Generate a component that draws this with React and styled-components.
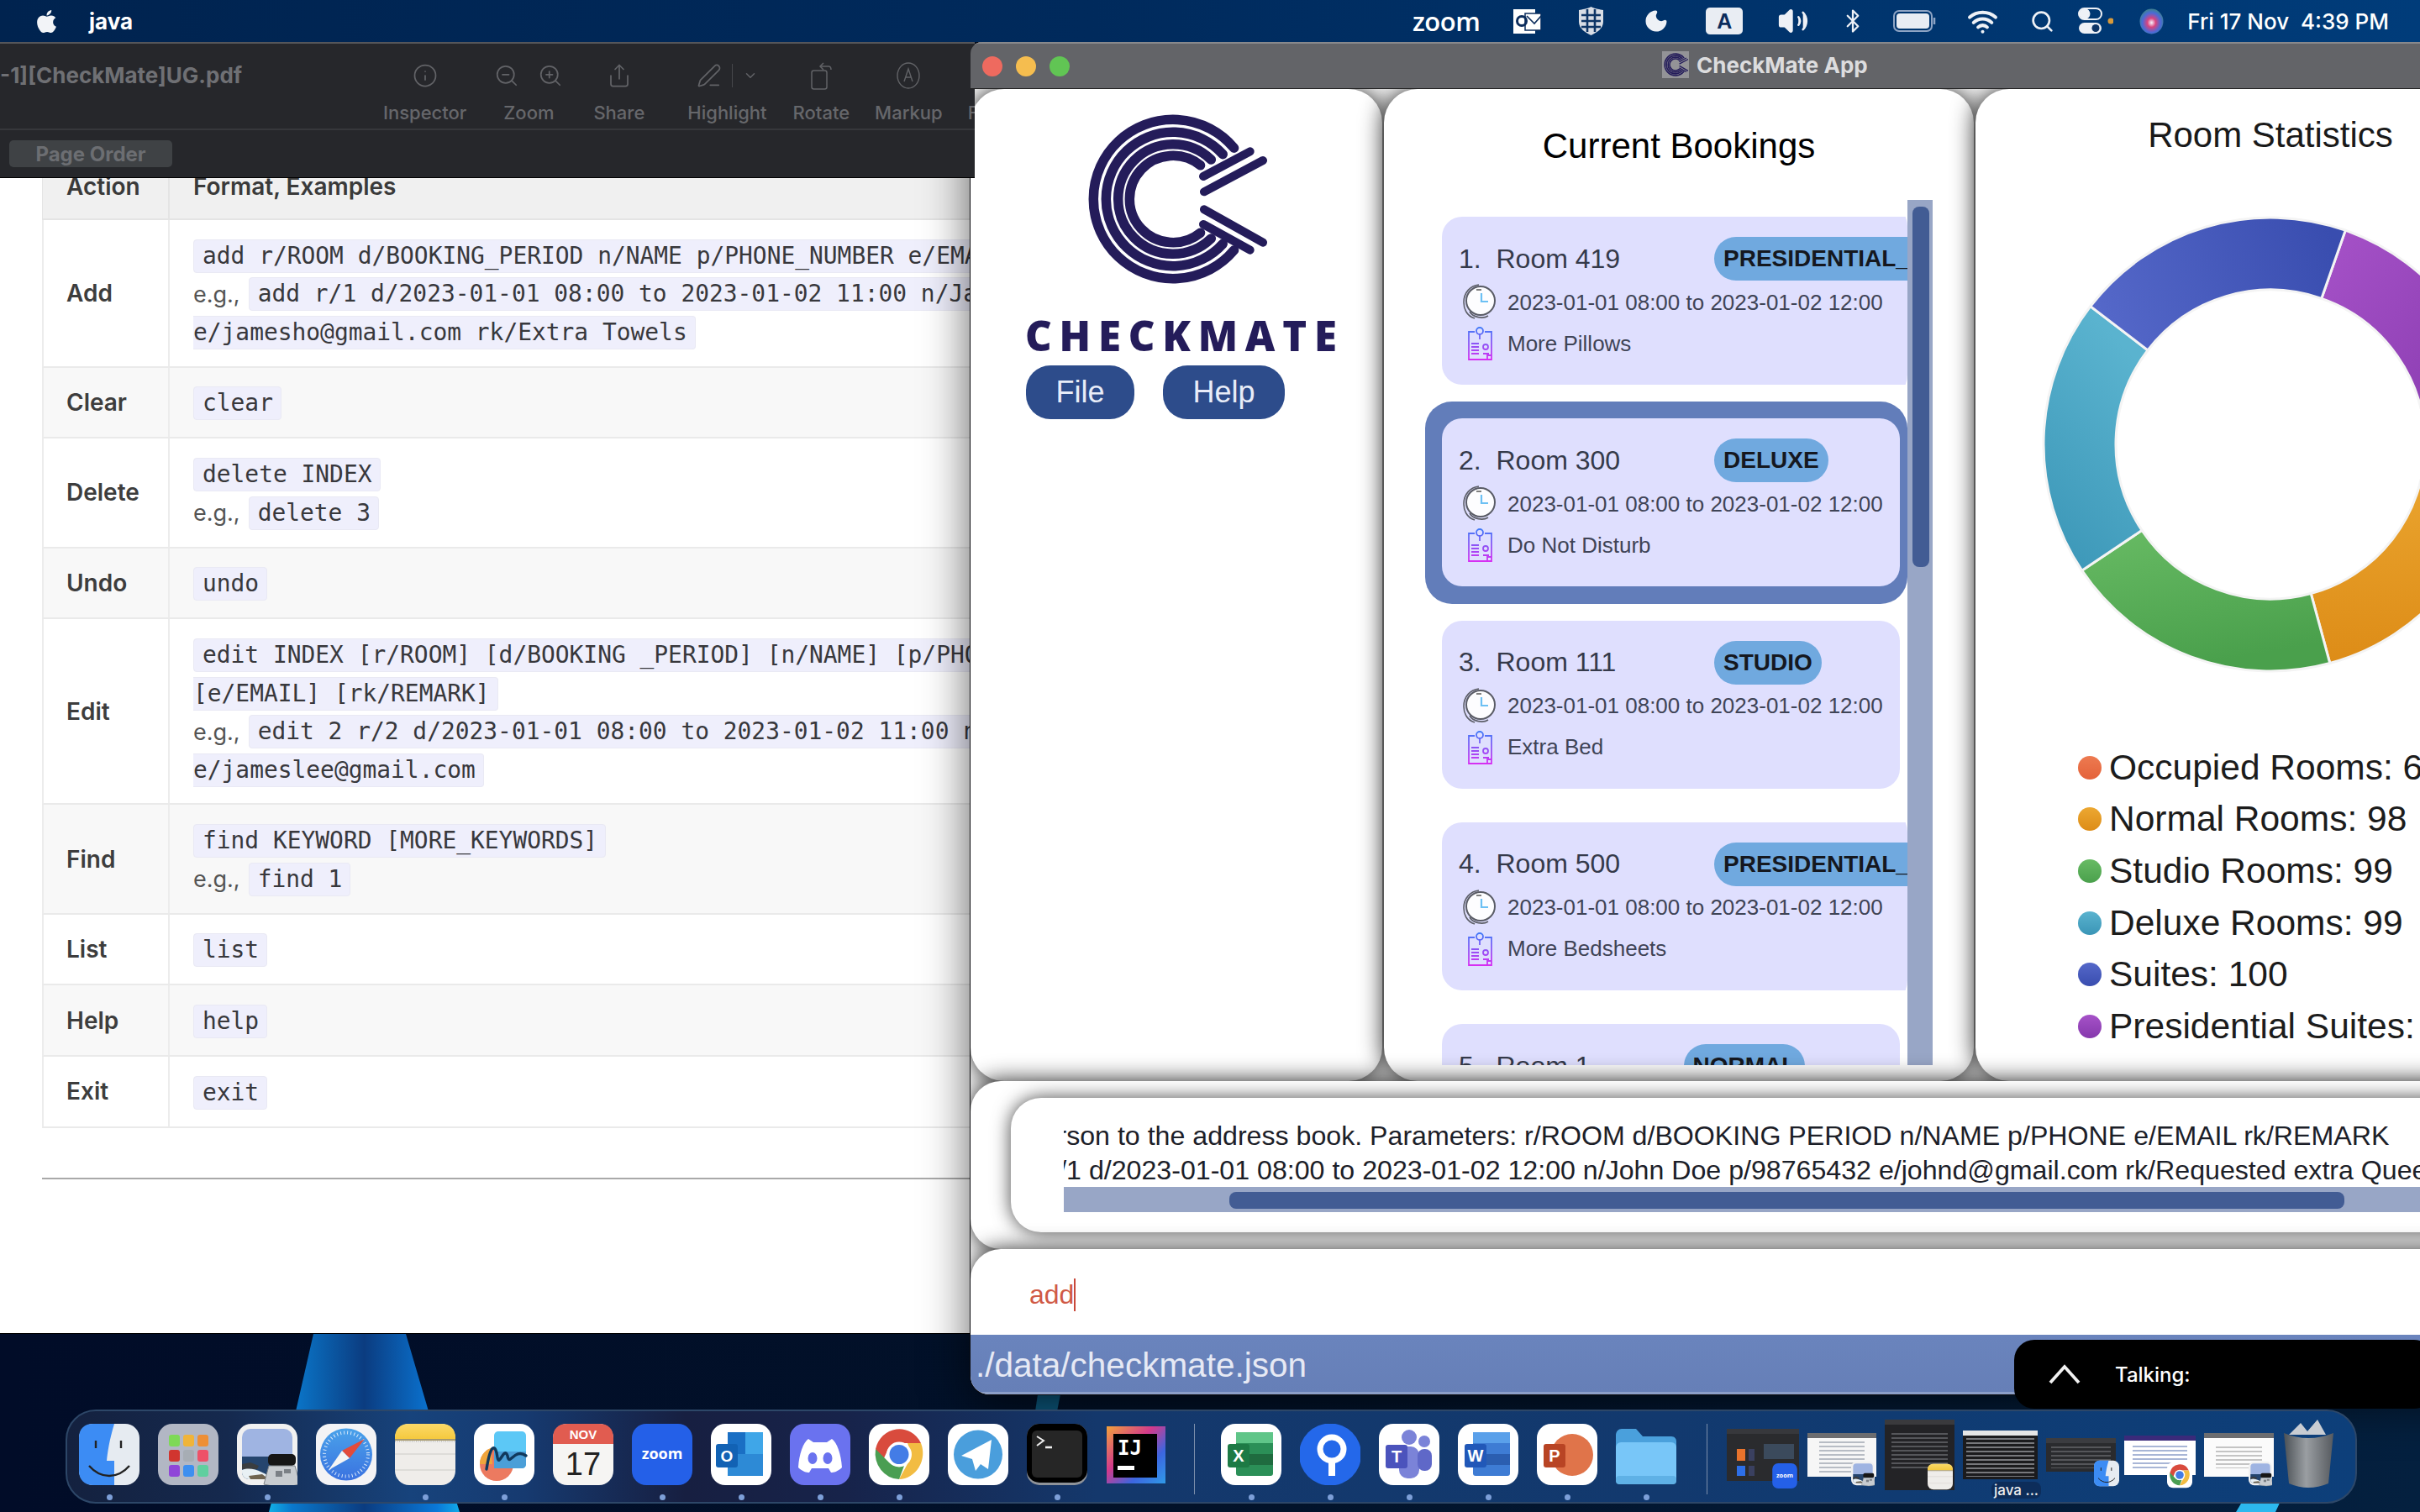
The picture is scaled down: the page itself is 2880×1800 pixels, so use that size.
import React from 'react';
import styled, { createGlobalStyle } from 'styled-components';
import { FaApple } from 'react-icons/fa';
import { Info, ZoomOut, ZoomIn, Share, PenLine, ChevronDown, Volume2, Bluetooth, Wifi, Search, Moon } from 'lucide-react';

const GlobalStyle = createGlobalStyle`
  html, body { margin: 0; padding: 0; background: #020d2a; }
  * { box-sizing: border-box; }
`;

const SANS = '"Liberation Sans", Arial, sans-serif';
const UI = 'Inter, "Liberation Sans", sans-serif';
const MONO = '"DejaVu Sans Mono", "Liberation Mono", monospace';

const Screen = styled.div`
  position: relative;
  width: 2880px;
  height: 1800px;
  overflow: hidden;
  display: flex;
  flex-direction: column;
  font-family: ${SANS};
  background: linear-gradient(90deg, #010c28 0%, #021229 50%, #04203f 100%);
`;

const Wallpaper = styled.svg`
  position: absolute;
  left: 0;
  top: 0;
`;

/* menu bar */
const MenuBar = styled.div`
  position: relative;
  z-index: 5;
  height: 50px;
  flex: none;
  display: flex;
  align-items: center;
  padding: 0 37px 0 40px;
  color: #fff;
  background: linear-gradient(90deg, #00234f 0%, #002a5c 45%, #003c7a 100%);
`;

const AppName = styled.span`
  font: 700 26px ${UI};
  margin-left: 35px;
  margin-right: auto;
`;

const ZoomWord = styled.span`
  font: 600 31px "Open Sans", sans-serif;
  letter-spacing: -0.5px;
  margin-right: 40px;
`;

const Clock = styled.span`
  font: 500 26px ${UI};
  white-space: pre;
  margin-left: 28px;
`;

const StatusIcon = styled.span`
  display: flex;
  align-items: center;
  justify-content: center;
  margin-left: ${p => p.$ml || 0}px;
`;

const InputBadge = styled.span`
  width: 44px;
  height: 32px;
  border-radius: 5px;
  background: #e9edf3;
  color: #0b2c5c;
  display: flex;
  align-items: center;
  justify-content: center;
  font: 700 25px ${SANS};
`;

const DesktopArea = styled.div`
  position: relative;
  flex: none;
  height: 1628px;
`;

/* pdf window */
const PdfWindow = styled.div`
  position: absolute;
  left: 0;
  top: 0;
  width: 1160px;
  height: 1538px;
  display: flex;
  flex-direction: column;
  overflow: hidden;
  background: #fff;
  border-bottom: 1px solid #000;
`;

const PdfToolbar = styled.div`
  height: 161px;
  flex: none;
  background: #26272b;
  border-top: 2px solid #55565a;
  display: flex;
  flex-direction: column;
  box-shadow: 0 1px 0 #000;
  position: relative;
  z-index: 1;
`;

const ToolRow = styled.div`
  height: 103px;
  display: flex;
  border-bottom: 2px solid #36373b;
`;

const FileName = styled.div`
  width: 456px;
  flex: none;
  padding-top: 22px;
  font: 700 26px ${UI};
  color: #6f7074;
  white-space: nowrap;
`;

const ToolItem = styled.div`
  flex: none;
  margin-left: ${p => p.$ml || 0}px;
  display: flex;
  flex-direction: column;
  align-items: center;
  gap: 13px;
  padding-top: 20px;
  color: #626367;
`;

const ToolIcons = styled.div`
  height: 36px;
  display: flex;
  align-items: center;
  gap: ${p => p.$gap || 0}px;
`;

const ToolLabel = styled.span`
  font: 500 22px ${UI};
  color: #66676b;
`;

const ToolDivider = styled.span`
  width: 1px;
  height: 28px;
  background: #47484c;
`;

const PageOrderRow = styled.div`
  flex: 1;
  padding-left: 11px;
  display: flex;
  align-items: center;
`;

const PageOrder = styled.div`
  width: 194px;
  height: 32px;
  border-radius: 5px;
  background: #3f4245;
  color: #6c6e72;
  font: 700 24px ${UI};
  display: flex;
  align-items: center;
  justify-content: center;
`;

const PdfPage = styled.div`
  flex: 1;
  padding-left: 50px;
  overflow: hidden;
  color: #333;
`;

const TableHead = styled.div`
  height: 51px;
  display: grid;
  grid-template-columns: 149px 1fr;
  background: #f0f0f0;
  border-bottom: 2px solid #e4e4e4;
  border-left: 1px solid #e4e4e4;
`;

const TableRow = styled.div`
  display: grid;
  grid-template-columns: 148px 1fr;
  background: ${p => (p.$shade ? '#f8f8f8' : '#fff')};
  border-bottom: 2px solid #eaeaea;
  border-left: 2px solid #ececec;
`;

const HeadCell = styled.div`
  font: 600 28px ${UI};
  line-height: 20px;
  padding: 0 0 27px 28px;
  display: flex;
  align-items: center;
  color: #3a3a3a;
  & + & { border-left: 2px solid #e4e4e4; }
`;

const ActionCell = styled.div`
  font: 600 28px ${UI};
  padding-left: 27px;
  display: flex;
  align-items: center;
  color: #3d3d3d;
`;

const FormatCell = styled.div`
  border-left: 2px solid #ececec;
  padding: 20px 0 17.2px 28px;
  overflow: hidden;
`;

const CodeLine = styled.div`
  height: 45.5px;
  display: flex;
  align-items: center;
  white-space: nowrap;
`;

const Eg = styled.span`
  font: 400 27px ${UI};
  color: #555;
  margin-right: 10px;
`;

const Code = styled.code`
  font: 400 27.9px ${MONO};
  color: #38383c;
  background: #efeffc;
  border: 1px solid #e9e9f4;
  border-left-width: ${p => (p.$wrapped ? 0 : 1)}px;
  border-radius: ${p => (p.$wrapped ? '0 4px 4px 0' : '4px')};
  height: 40px;
  line-height: 38px;
  padding: 0 9px 0 ${p => (p.$wrapped ? 0 : 10)}px;
`;

const PageRule = styled.div`
  height: 2px;
  margin-top: 59px;
  background: #a9a9a9;
`;

/* checkmate window */
const AppWindow = styled.div`
  position: absolute;
  left: 1155px;
  top: 0;
  width: 1901px;
  height: 1610px;
  display: flex;
  flex-direction: column;
  overflow: hidden;
  background: #fff;
  border-radius: 14px 0 0 22px;
  box-shadow: 0 0 0 1px #0c0c0e, 0 12px 56px rgba(0, 0, 0, 0.62);
`;

const TitleBar = styled.div`
  position: relative;
  z-index: 2;
  height: 56px;
  flex: none;
  background: #636468;
  border-top: 2px solid #88898c;
  border-bottom: 1px solid #222;
  display: flex;
  align-items: center;
  padding-left: 14px;
`;

const Light = styled.span`
  width: 24px;
  height: 24px;
  border-radius: 50%;
  margin-right: 16px;
  background: ${p => p.$color};
`;

const TitleText = styled.div`
  display: flex;
  align-items: center;
  gap: 9px;
  margin: -3px 0 0 689px;
  font: 700 26px ${UI};
  color: #dcdcde;
`;

const TitleLogo = styled.span`
  width: 32px;
  height: 32px;
  background: #939397;
  display: flex;
  align-items: center;
  justify-content: center;
`;

const TopPanels = styled.div`
  height: 1181px;
  flex: none;
  display: flex;
  gap: 2px;
  background: #fff;
`;

const Panel = styled.section`
  flex: none;
  width: ${p => p.$width}px;
  height: 100%;
  background: #fff;
  border-radius: 40px;
  box-shadow: 0 0 28px rgba(0, 0, 0, 0.88);
  display: flex;
  flex-direction: column;
`;

const Logo = styled.svg`
  display: block;
  margin: 26px 0 0 136px;
  filter: blur(0.6px);
  flex: none;
`;

const Brand = styled.div`
  margin: 32px 0 0 65px;
  font: 800 49px/50px "Open Sans", sans-serif;
  letter-spacing: 8.8px;
  color: #241c5a;
  filter: blur(0.5px);
`;

const ButtonRow = styled.div`
  display: flex;
  gap: 34px;
  margin: 11px 0 0 66px;
`;

const MenuButton = styled.div`
  height: 64px;
  width: ${p => p.$width}px;
  border-radius: 29px;
  background: #2d4c8b;
  color: #e8ecf8;
  font: 400 36px ${SANS};
  display: flex;
  align-items: center;
  justify-content: center;
`;

const PanelTitle = styled.h2`
  margin: 0;
  font: 400 42px/50px ${SANS};
  text-align: center;
  color: ${p => p.$color || '#000'};
`;

const BookingTitle = styled(PanelTitle)`
  margin: 43px 0 39px;
`;

const ScrollPane = styled.div`
  height: 1030px;
  width: 604px;
  margin-left: 49px;
  display: flex;
`;

const BookingList = styled.div`
  width: 574px;
  flex: none;
  overflow: hidden;
`;

const BookingCell = styled.div`
  height: 240.3px;
  padding: 20px 9px 20px 20px;
  border-radius: 32px;
  background: ${p => (p.$selected ? '#627dba' : 'transparent')};
  overflow: hidden;
`;

const BookingCard = styled.div`
  width: ${p => (p.$wide ? 620 : 545)}px;
  height: 200px;
  border-radius: 24px;
  background: #dfdffe;
  padding: 24px 0 0 20px;
  color: #353a4a;
`;

const RoomRow = styled.div`
  height: 52px;
  display: flex;
  align-items: center;
`;

const RoomName = styled.span`
  font: 400 32px ${SANS};
  white-space: pre;
  min-width: ${p => (p.$short ? 0 : 193)}px;
  margin-right: 111px;
`;

const Pill = styled.span`
  height: 52px;
  border-radius: 26px;
  background: #70a9df;
  color: #15181f;
  padding: 0 11px;
  font: 700 28px/52px ${SANS};
  white-space: nowrap;
`;

const DetailRow = styled.div`
  display: flex;
  align-items: center;
  gap: 13px;
  height: ${p => p.$height}px;
  margin: ${p => p.$mt}px 0 0 5px;
  font: 400 26px ${SANS};
  color: #3f4456;
  white-space: nowrap;
`;

const IconSlot = styled.span`
  width: 40px;
  display: flex;
  justify-content: center;
  flex: none;
`;

const ScrollTrack = styled.div`
  width: 30px;
  flex: none;
  padding: 8px 4px 0 6px;
  background: #98a6c6;
`;

const ScrollThumb = styled.div`
  height: 429px;
  border-radius: 8px;
  background: #425c94;
`;

const StatsBody = styled.div`
  padding-top: 30px;
  display: flex;
  flex-direction: column;
  align-items: center;
`;

const Donut = styled.svg`
  display: block;
  margin-top: 70px;
`;

const Legend = styled.ul`
  list-style: none;
  margin: 81px 0 0;
  padding: 0 0 0 122px;
  align-self: stretch;
`;

const LegendRow = styled.li`
  height: 61.6px;
  display: flex;
  align-items: center;
  gap: 9px;
  font: 400 42.5px ${SANS};
  color: #1c1c1c;
  white-space: nowrap;
`;

const LegendDot = styled.span`
  width: 28px;
  height: 28px;
  border-radius: 50%;
  background: ${p => p.$color};
`;

const ResultPanel = styled.section`
  height: 200px;
  flex: none;
  background: #fff;
  border-radius: 36px;
  box-shadow: 0 0 28px rgba(0, 0, 0, 0.88);
  padding: 20px 0 0 48px;
`;

const ResultBox = styled.div`
  height: 160px;
  background: #fff;
  border-radius: 36px 0 0 36px;
  box-shadow: 0 0 22px rgba(0, 0, 0, 0.72);
  padding: 25px 0 0 63px;
`;

const ResultClip = styled.div`
  height: 81px;
  overflow: hidden;
`;

const ResultLine = styled.div`
  margin-left: -222px;
  font: 400 32.15px/41px ${SANS};
  color: #1c2028;
  white-space: pre;
`;

const HScrollTrack = styled.div`
  height: 30px;
  padding: 6px 0 4px 197px;
  background: #98a6c6;
`;

const HScrollThumb = styled.div`
  width: 1327px;
  height: 20px;
  border-radius: 8px;
  background: #425c94;
`;

const InputPanel = styled.section`
  height: 102px;
  flex: none;
  background: #fff;
  border-radius: 36px 0 0 0;
  box-shadow: 0 0 26px rgba(0, 0, 0, 0.82);
  padding-left: 70px;
  display: flex;
  align-items: center;
`;

const CommandText = styled.span`
  font: 400 32px/39px ${SANS};
  color: #d05a46;
  border-right: 2px solid #c9483a;
  margin-top: 6px;
`;

const StatusBar = styled.div`
  position: relative;
  flex: 1;
  display: flex;
  align-items: center;
  padding: 4px 0 0 6px;
  background: linear-gradient(#6a84bd, #667fb7);
  border-bottom: 3px solid #8c9fc9;
  font: 400 40.5px ${SANS};
  color: #e6e9f4;
`;

const ZoomHud = styled.div`
  position: absolute;
  left: 2397px;
  top: 1545px;
  width: 500px;
  height: 82px;
  z-index: 4;
  background: #000;
  border-radius: 24px;
  display: flex;
  align-items: center;
  gap: 41px;
  padding-left: 41px;
  color: #fff;
  font: 500 24px ${UI};
`;

/* dock */
const Dock = styled.div`
  position: relative;
  z-index: 3;
  width: 2727px;
  height: 112px;
  margin-left: 78px;
  flex: none;
  display: flex;
  align-items: flex-start;
  padding: 15px 0 0 14px;
  border: 2px solid #2d4768;
  border-radius: 36px;
  background: linear-gradient(90deg,
    #14213f 0%, #15294e 7%, #17437c 15%, #163a70 20%, #171f41 27%, #17234a 34%,
    #14386c 45%, #12396e 70%, #0f3c74 85%, #0d3f7a 100%);
`;

const DockSlot = styled.div`
  width: 72px;
  margin-right: ${p => p.$mr ?? 22}px;
  flex: none;
  display: flex;
  flex-direction: column;
  align-items: center;
`;

const RunDot = styled.span`
  width: 7px;
  height: 7px;
  margin-top: 11px;
  border-radius: 50%;
  background: ${p => (p.$on ? '#7d9fd8' : 'transparent')};
`;

const DockDivider = styled.span`
  width: 1px;
  height: 84px;
  margin: 0 ${p => p.$right}px 0 ${p => p.$left}px;
  background: #7c8fab;
  flex: none;
`;

const ThumbSlot = styled.div`
  height: 74px;
  width: ${p => p.$width}px;
  margin-right: 10px;
  flex: none;
  display: flex;
  align-items: center;
  justify-content: center;
`;

const Thumb = styled.div`
  position: relative;
  width: 100%;
  height: ${p => p.$height}px;
  background: ${p => p.$bg};
  border-top: 6px solid ${p => p.$bar};
`;

const ThumbLines = styled.div`
  height: calc(100% - ${p => p.$trim}px);
  margin: ${p => p.$inset};
  background: ${p => p.$art || `repeating-linear-gradient(${p.$color} 0 2px, transparent 2px 5px)`};
`;

const ThumbBadge = styled.span`
  position: absolute;
  right: ${p => p.$right}px;
  bottom: ${p => p.$bottom}px;
  width: 30px;
`;

const ThumbCaption = styled.span`
  position: absolute;
  left: 34px;
  top: 55px;
  padding: 0 3px;
  border-radius: 8px;
  background: #0d2d5a;
  color: #eee;
  font: 500 17px ${UI};
  white-space: nowrap;
`;

const Trash = styled.svg`
  display: block;
  flex: none;
  margin-top: -7px;
`;

const ClockGlyph = () => (
  <svg width="40" height="44" viewBox="0 0 40 44">
    <path d="M14 41 C4 38 1 29 1 22 C1 10 9 2 19 1" fill="none" stroke="#5d5f68" strokeWidth="1.6" />
    <circle cx="21" cy="20" r="17" fill="#fdfdff" stroke="#5a5c66" strokeWidth="2" />
    <path d="M8 33 C12 40 24 42 30 38" fill="none" stroke="#5d5f68" strokeWidth="1.6" />
    <path d="M22 11 V21 H30" fill="none" stroke="#6cc0f4" strokeWidth="2.2" />
    <path d="M16 7 H22" stroke="#555" strokeWidth="1.6" />
  </svg>
);

const RemarkGlyph = () => (
  <svg width="30" height="40" viewBox="0 0 30 40">
    <defs>
      <linearGradient id="remarkStroke" gradientUnits="userSpaceOnUse" x1="0" y1="0" x2="0" y2="40">
        <stop offset="0" stopColor="#3f7cf8" />
        <stop offset="1" stopColor="#d92ef2" />
      </linearGradient>
    </defs>
    <g fill="none" stroke="url(#remarkStroke)" strokeWidth="1.8">
      <path d="M9 6 H2 V39 H29 V6 H21" />
      <circle cx="15" cy="5" r="4" />
      <path d="M15 9 V15" />
      <path d="M5 20 H14 M5 24 H14 M5 28 H14 M5 32 H14 M19 32 H26" />
      <circle cx="22" cy="24" r="3" />
      <path d="M24 39 V34 H29" />
    </g>
  </svg>
);

const CheckmateMark = () => {
  const rings = [[94.7, 40], [79.7, 42], [65.3, 46], [51.7, 51]];
  const bars = [
    [36, -27, 91.7, -56.7],
    [37, -8.7, 107, -46],
    [37, 12.3, 107, 51.7],
    [36, 30, 91.7, 60.7],
  ];
  return (
    <g fill="none" stroke="#241c5a" strokeLinecap="round">
      {rings.map(([r, a]) => {
        const x = r * Math.cos((a * Math.PI) / 180);
        const y = r * Math.sin((a * Math.PI) / 180);
        return <path key={r} strokeWidth="11.5" d={`M${x} ${-y} A${r} ${r} 0 1 0 ${x} ${y}`} />;
      })}
      {bars.map(b => (
        <line key={b[1]} x1={b[0]} y1={b[1]} x2={b[2]} y2={b[3]} strokeWidth="10" />
      ))}
    </g>
  );
};

const polar = (r, deg) => {
  const a = ((deg - 90) * Math.PI) / 180;
  return [273 + r * Math.cos(a), 273 + r * Math.sin(a)];
};

const ringSlice = (from, to) => {
  const [x1, y1] = polar(270, from);
  const [x2, y2] = polar(270, to);
  const [x3, y3] = polar(184, to);
  const [x4, y4] = polar(184, from);
  const big = to - from > 180 ? 1 : 0;
  return `M${x1} ${y1} A270 270 0 ${big} 1 ${x2} ${y2} L${x3} ${y3} A184 184 0 ${big} 0 ${x4} ${y4} Z`;
};

const slices = [
  { id: 'purple', from: 19.3, to: 91, stops: ['#a652c8', '#8538ac'], dir: [0, 0, 1, 1] },
  { id: 'orange', from: 91, to: 164.8, stops: ['#eca832', '#dd8c17'], dir: [0, 0, 0, 1] },
  { id: 'green', from: 164.8, to: 236.2, stops: ['#68bb64', '#4aa04c'], dir: [0, 0, 0.3, 1] },
  { id: 'teal', from: 236.2, to: 307.5, stops: ['#5ab3cf', '#3a95b6'], dir: [0.4, 0, 0, 1] },
  { id: 'blue', from: 307.5, to: 379.3, stops: ['#5568c9', '#394daf'], dir: [0, 0.6, 1, 0.4] },
];

const legend = [
  ['Occupied Rooms: 6', 'linear-gradient(#ed7a50, #e4623a)'],
  ['Normal Rooms: 98', 'linear-gradient(#eca832, #dd8c17)'],
  ['Studio Rooms: 99', 'linear-gradient(#68bb64, #4aa04c)'],
  ['Deluxe Rooms: 99', 'linear-gradient(#5ab3cf, #3a95b6)'],
  ['Suites: 100', 'linear-gradient(#5568c9, #394daf)'],
  ['Presidential Suites: 100', 'linear-gradient(#a652c8, #8538ac)'],
];

const bookings = [
  { line: '1.  Room 419', type: 'PRESIDENTIAL_SUITE', remark: 'More Pillows', wide: true },
  { line: '2.  Room 300', type: 'DELUXE', remark: 'Do Not Disturb', selected: true },
  { line: '3.  Room 111', type: 'STUDIO', remark: 'Extra Bed' },
  { line: '4.  Room 500', type: 'PRESIDENTIAL_SUITE', remark: 'More Bedsheets', wide: true },
  { line: '5.  Room 1', type: 'NORMAL', remark: '', short: true },
];

// third entry of a line: code that wrapped over from the line above, so no left padding
const actions = [
  { name: 'Add', lines: [
    [null, 'add r/ROOM d/BOOKING_PERIOD n/NAME p/PHONE_NUMBER e/EMAIL'],
    ['e.g.,', 'add r/1 d/2023-01-01 08:00 to 2023-01-02 11:00 n/James Ho p/98765432'],
    [null, 'e/jamesho@gmail.com rk/Extra Towels', true],
  ] },
  { name: 'Clear', shade: true, lines: [[null, 'clear']] },
  { name: 'Delete', lines: [[null, 'delete INDEX'], ['e.g.,', 'delete 3']] },
  { name: 'Undo', shade: true, lines: [[null, 'undo']] },
  { name: 'Edit', lines: [
    [null, 'edit INDEX [r/ROOM] [d/BOOKING _PERIOD] [n/NAME] [p/PHONE_NUMBER]'],
    [null, '[e/EMAIL] [rk/REMARK]', true],
    ['e.g.,', 'edit 2 r/2 d/2023-01-01 08:00 to 2023-01-02 11:00 n/James Lee p/91234567'],
    [null, 'e/jameslee@gmail.com', true],
  ] },
  { name: 'Find', shade: true, lines: [[null, 'find KEYWORD [MORE_KEYWORDS]'], ['e.g.,', 'find 1']] },
  { name: 'List', lines: [[null, 'list']] },
  { name: 'Help', shade: true, lines: [[null, 'help']] },
  { name: 'Exit', lines: [[null, 'exit']] },
];

const Glyph = ({ children, w = 72, h = 73 }) => (
  <svg width={w} height={h} viewBox="0 0 72 73" style={{ display: 'block' }}>{children}</svg>
);

const Plate = ({ fill = '#fff' }) => <rect x="0" y="0" width="72" height="73" rx="17" fill={fill} />;

const FinderIcon = ({ w, h }) => (
  <Glyph w={w} h={h}>
    <Plate fill="#e6ebf1" />
    <path d="M17 0 H42 C36 20 34 34 33 44 H42 V73 H17 C6 73 0 66 0 56 V17 C0 6 6 0 17 0Z" fill="#3c8cf4" />
    <path d="M20 20 V29 M50 20 V29" stroke="#222" strokeWidth="2.4" />
    <path d="M12 50 C26 66 46 66 60 50" fill="none" stroke="#222" strokeWidth="2.4" />
  </Glyph>
);

const LaunchpadIcon = () => (
  <Glyph>
    <Plate fill="#b2b7c4" />
    {['#7ed957', '#f0b43a', '#ee8f35', '#d1352f', '#a7adb4', '#ee5168', '#8f45d8', '#3d8ff0', '#5fcf9f'].map((c, i) => (
      <rect key={c} x={13 + (i % 3) * 17} y={13 + Math.floor(i / 3) * 18} width="13" height="14" rx="3" fill={c} />
    ))}
  </Glyph>
);

const PreviewIcon = ({ w, h }) => (
  <Glyph w={w} h={h}>
    <rect width="72" height="73" rx="17" fill="#f1f1f1" />
    <rect x="6" y="6" width="60" height="60" rx="10" fill="#9fb4e2" />
    <path d="M6 39 H66 V58 C66 62 62 66 58 66 H14 C10 66 6 62 6 58Z" fill="#25456e" />
    <path d="M6 48 L16 46 L26 50 L24 54 L6 54Z" fill="#3a3d40" />
    <path d="M6 55 C18 50 32 58 44 66 H14 C10 66 6 62 6 58Z" fill="#e8f0f4" />
    <path d="M14 62 L30 60 L38 66 H16Z" fill="#6f6450" />
    <rect x="37" y="36" width="33" height="14" rx="5" fill="#161616" />
    <path d="M38 50 H69 L75 72 Q54 78 32 72Z" fill="#c8ccd0" stroke="#7f8488" />
    <rect x="46" y="56" width="8" height="7" fill="#7b8086" />
    <rect x="56" y="54" width="8" height="5" fill="#7b8086" />
  </Glyph>
);

const SafariIcon = () => (
  <Glyph>
    <defs>
      <linearGradient id="safariFace" x1="0" y1="0" x2="0" y2="1">
        <stop offset="0" stopColor="#4aa2ea" />
        <stop offset="1" stopColor="#3a72e0" />
      </linearGradient>
    </defs>
    <rect width="72" height="73" rx="17" fill="#f3f3f5" />
    <circle cx="36" cy="36.5" r="31" fill="url(#safariFace)" />
    <circle cx="36" cy="36.5" r="26" fill="none" stroke="#e6f0fb" strokeWidth="4" strokeDasharray="0.9 3.2" />
    <path d="M58 18 L40 41 L31 32Z" fill="#e34b3b" />
    <path d="M15 55 L31 32 L40 41Z" fill="#f4f4f4" />
  </Glyph>
);

const NotesIcon = ({ w, h }) => (
  <Glyph w={w} h={h}>
    <defs>
      <linearGradient id="notesTop" x1="0" y1="0" x2="0" y2="1">
        <stop offset="0" stopColor="#fbd968" />
        <stop offset="1" stopColor="#f5c93e" />
      </linearGradient>
    </defs>
    <rect width="72" height="73" rx="17" fill="#efedea" />
    <path d="M0 18 V17 C0 6 6 0 17 0 H55 C66 0 72 6 72 17 V18Z" fill="url(#notesTop)" />
    <rect y="18" width="72" height="2" fill="#a89a6c" />
    <path d="M0 21 H72" stroke="#bbb" strokeDasharray="1 1.5" strokeWidth="1.5" />
    <path d="M0 36 H72 M0 55 H72" stroke="#d8d6d2" strokeWidth="1.5" />
  </Glyph>
);

const FreeformIcon = () => (
  <Glyph>
    <Plate />
    <circle cx="27" cy="48" r="20" fill="#ec7a60" />
    <path d="M7 48 A20 20 0 0 1 20 29 L22 48Z" fill="#f0a53c" />
    <rect x="24" y="9" width="38" height="44" rx="5" fill="#5cc8f6" />
    <path d="M24 33 H62 V48 C62 51 60 53 57 53 H24Z" fill="#4b9fd8" />
    <path d="M15 54 C20 22 26 24 28 40 C30 52 36 26 40 38 C42 52 48 28 62 38" fill="none" stroke="#11395c" strokeWidth="3.4" strokeLinecap="round" />
  </Glyph>
);

const CalendarIcon = () => (
  <Glyph>
    <Plate fill="#f6f5f3" />
    <path d="M0 24 V17 C0 6 6 0 17 0 H55 C66 0 72 6 72 17 V24Z" fill="#e15c50" />
    <text x="36" y="18" textAnchor="middle" fontFamily={SANS} fontSize="15" fontWeight="700" fill="#fff">NOV</text>
    <text x="36" y="61" textAnchor="middle" fontFamily={SANS} fontSize="38" fill="#222">17</text>
  </Glyph>
);

const ZoomIcon = ({ w, h }) => (
  <Glyph w={w} h={h}>
    <rect width="72" height="73" rx="17" fill="#2460e8" />
    <text x="36" y="42" textAnchor="middle" fontFamily='"Open Sans", sans-serif' fontSize="18" fontWeight="700" fill="#fff">zoom</text>
  </Glyph>
);

const OutlookIcon = () => (
  <Glyph>
    <Plate />
    <rect x="20" y="10" width="42" height="52" fill="#1a6fc4" />
    <rect x="41" y="10" width="21" height="26" fill="#3fa6e8" />
    <rect x="20" y="36" width="42" height="26" fill="#2d8ad6" />
    <rect x="6" y="24" width="26" height="28" rx="3" fill="#1262b4" />
    <text x="19" y="45" textAnchor="middle" fontFamily={SANS} fontSize="19" fontWeight="700" fill="#fff">O</text>
  </Glyph>
);

const DiscordIcon = () => (
  <Glyph>
    <rect width="72" height="73" rx="17" fill="#6a72ef" />
    <path d="M22 18 L28 22 H44 L50 18 C56 22 61 36 62 52 C57 57 52 58 49 58 L46 53 H26 L23 58 C20 58 15 57 10 52 C11 36 16 22 22 18Z" fill="#fff" />
    <ellipse cx="27" cy="41" rx="5.5" ry="7" fill="#6a72ef" />
    <ellipse cx="45" cy="41" rx="5.5" ry="7" fill="#6a72ef" />
  </Glyph>
);

const ChromeIcon = ({ w, h }) => (
  <Glyph w={w} h={h}>
    <Plate />
    <path d="M8 30 A29 31 0 0 1 62 23 L36 23 C30 23 26 25 23 30 L16 45Z" fill="#d94b3d" />
    <path d="M62 23 A29 31 0 0 1 36 66 L48 44 C50 38 49 30 46 23Z" fill="#f2bc42" />
    <path d="M36 66 A29 31 0 0 1 8 30 L24 46 C28 50 34 52 42 50Z" fill="#4a9e52" />
    <circle cx="36" cy="36.5" r="15" fill="#fff" />
    <circle cx="36" cy="36.5" r="11.5" fill="#437ce6" />
  </Glyph>
);

const TelegramIcon = () => (
  <Glyph>
    <Plate />
    <circle cx="36" cy="36.5" r="29" fill="#4a9edc" />
    <path d="M52 19 L16 38 L29 42 L33 56 L39 48 L48 54Z" fill="#fff" />
  </Glyph>
);

const TerminalIcon = () => (
  <Glyph>
    <rect width="72" height="73" rx="15" fill="#8f9399" />
    <rect y="0" width="72" height="70" rx="15" fill="#000" />
    <rect x="6" y="8" width="60" height="56" rx="6" fill="#262626" />
    <path d="M12 15 L20 20 L12 26" fill="none" stroke="#eee" strokeWidth="2" />
    <path d="M22 28 H30" stroke="#eee" strokeWidth="2.6" />
  </Glyph>
);

const IntellijIcon = () => (
  <Glyph>
    <defs>
      <linearGradient id="ijFrame" x1="0" y1="0" x2="1" y2="1">
        <stop offset="0" stopColor="#f2a23a" />
        <stop offset="0.4" stopColor="#d23a8c" />
        <stop offset="0.7" stopColor="#3d66e0" />
        <stop offset="1" stopColor="#2f9be8" />
      </linearGradient>
    </defs>
    <rect x="1" y="3" width="70" height="68" fill="url(#ijFrame)" />
    <rect x="9" y="12" width="52" height="52" fill="#000" />
    <text x="14" y="37" fontFamily={MONO} fontSize="24" fontWeight="700" fill="#fff">IJ</text>
    <rect x="14" y="50" width="20" height="5" fill="#fff" />
  </Glyph>
);

const OfficeIcon = ({ colors, letter, tiles }) => (
  <Glyph>
    <Plate />
    {tiles === 'round' ? (
      <circle cx="42" cy="37" r="25" fill={colors[1]} />
    ) : (
      <>
        <rect x="18" y="10" width="44" height="52" rx="3" fill={colors[1]} />
        <rect x="18" y="10" width="44" height="13" fill={colors[2]} />
        <rect x="18" y="36" width="44" height="13" fill={colors[3]} />
      </>
    )}
    <rect x="8" y="24" width="26" height="28" rx="3" fill={colors[0]} />
    <text x="21" y="45" textAnchor="middle" fontFamily={SANS} fontSize="20" fontWeight="700" fill="#fff">{letter}</text>
  </Glyph>
);

const SourcetreeIcon = () => (
  <Glyph>
    <circle cx="36" cy="36.5" r="37" fill="#2468ea" />
    <circle cx="38" cy="30" r="14" fill="none" stroke="#fff" strokeWidth="7" />
    <rect x="34" y="42" width="8" height="20" fill="#fff" />
  </Glyph>
);

const TeamsIcon = () => (
  <Glyph>
    <Plate />
    <circle cx="36" cy="16" r="9" fill="#7b83d8" />
    <circle cx="54" cy="21" r="7" fill="#7b83d8" />
    <rect x="24" y="27" width="24" height="38" rx="10" fill="#7b83d8" />
    <rect x="46" y="30" width="17" height="26" rx="8" fill="#5f68c8" />
    <rect x="8" y="25" width="26" height="28" rx="3" fill="#4b53bc" />
    <text x="21" y="46" textAnchor="middle" fontFamily={SANS} fontSize="20" fontWeight="700" fill="#fff">T</text>
  </Glyph>
);

const FolderIcon = () => (
  <Glyph>
    <path d="M0 14 C0 9 3 6 7 6 H24 L32 15 H66 C70 15 72 18 72 21 V66 C72 70 69 72 65 72 H7 C3 72 0 70 0 66Z" fill="#4aa0dc" />
    <rect x="0" y="22" width="72" height="50" rx="6" fill="#78c6f8" />
    <rect x="0" y="62" width="72" height="10" rx="4" fill="#5fb1e6" />
  </Glyph>
);

const TrashIcon = () => (
  <Trash width="63" height="84" viewBox="0 0 63 84">
    <defs>
      <linearGradient id="binBody" x1="0" x2="1">
        <stop offset="0" stopColor="#4b5156" />
        <stop offset="0.45" stopColor="#9a9ea2" />
        <stop offset="1" stopColor="#565a5f" />
      </linearGradient>
    </defs>
    <path d="M8 20 L22 6 L30 16 L42 2 L52 20Z" fill="#c8ccd2" />
    <path d="M2 18 Q31 30 61 18 L55 78 Q31 88 8 78Z" fill="url(#binBody)" />
  </Trash>
);

const dockLeft = [
  [<FinderIcon key="a" />, true],
  [<LaunchpadIcon key="b" />, false],
  [<PreviewIcon key="c" />, true],
  [<SafariIcon key="d" />, false],
  [<NotesIcon key="e" />, true],
  [<FreeformIcon key="f" />, true],
  [<CalendarIcon key="g" />, false],
  [<ZoomIcon key="h" />, true],
  [<OutlookIcon key="i" />, true],
  [<DiscordIcon key="j" />, true],
  [<ChromeIcon key="k" />, true],
  [<TelegramIcon key="l" />, false],
  [<TerminalIcon key="m" />, true],
  [<IntellijIcon key="n" />, false],
];

const dockRight = [
  <OfficeIcon key="x" letter="X" colors={['#1d7a45', '#2b8f57', '#5fc588', '#1f6b3f']} />,
  <SourcetreeIcon key="s" />,
  <TeamsIcon key="t" />,
  <OfficeIcon key="w" letter="W" colors={['#2158b8', '#3e7cd4', '#5aa0ea', '#2b5eb0']} />,
  <OfficeIcon key="p" letter="P" tiles="round" colors={['#b84424', '#e0744a']} />,
  <FolderIcon key="fo" />,
];

const zoomWindowArt = [
  'linear-gradient(#e8732c, #e8732c) 12px 18px / 10px 14px no-repeat',
  'linear-gradient(#3a4060, #3a4060) 26px 18px / 7px 14px no-repeat',
  'linear-gradient(#2d6fe8, #2d6fe8) 12px 38px / 10px 12px no-repeat',
  'linear-gradient(#3a4060, #3a4060) 26px 38px / 7px 12px no-repeat',
  'linear-gradient(#3b4a5c, #3b4a5c) 44px 12px / 36px 18px no-repeat',
].join(', ');

const thumbs = [
  { width: 86, height: 62, bg: '#2a2b2e', bar: '#37383c', art: zoomWindowArt, inset: '0', trim: 0, badge: <ZoomIcon w={30} h={30} />, right: 2, bottom: -9 },
  { width: 82, height: 52, bg: '#f6f6f6', bar: '#6c6d70', lines: '#b7bcc4', inset: '4px 14px', trim: 8, badge: <PreviewIcon w={28} h={40} />, right: 0, bottom: -16 },
  { width: 83, height: 84, bg: '#232326', bar: '#3a3a3d', lines: '#55565a', inset: '10px 8px', trim: 36, badge: <NotesIcon w={30} h={36} />, right: 2, bottom: -2 },
  { width: 89, height: 58, bg: '#1b1b1d', bar: '#e6e6e6', lines: '#77787c', inset: '3px 4px', trim: 6, caption: 'java ...' },
  { width: 83, height: 40, bg: '#2a2b2e', bar: '#3b3c40', lines: '#55565a', inset: '4px 6px', trim: 8, badge: <FinderIcon w={30} h={36} />, right: -4, bottom: -20 },
  { width: 85, height: 47, bg: '#fff', bar: '#3a2a7a', lines: '#a8b6d6', inset: '6px 10px', trim: 12, badge: <ChromeIcon w={30} h={40} />, right: 4, bottom: -20 },
  { width: 83, height: 52, bg: '#fbfbfb', bar: '#6c6d70', lines: '#c4c4c4', inset: '10px 14px', trim: 20, badge: <PreviewIcon w={28} h={40} />, right: 0, bottom: -16 },
];

const App = () => (
  <Screen>
    <GlobalStyle />
    <Wallpaper width="2880" height="1800" viewBox="0 0 2880 1800">
      <defs>
        <linearGradient id="beam" x1="0" x2="1">
          <stop offset="0" stopColor="#12b0e6" />
          <stop offset="0.12" stopColor="#0a78cc" />
          <stop offset="0.5" stopColor="#0b3c80" />
          <stop offset="0.88" stopColor="#0a78d8" />
          <stop offset="1" stopColor="#12aae8" />
        </linearGradient>
      </defs>
      <polygon points="373,1588 483,1588 510,1680 547,1800 320,1800 352,1680" fill="url(#beam)" />
      <polygon points="1235,1660 1262,1660 1258,1680 1232,1680" fill="#0c5a80" />
      <polygon points="2661,1800 2670,1785 2715,1785 2708,1800" fill="#2cb8ee" />
    </Wallpaper>

    <MenuBar>
      <FaApple size={31} color="#f2f4f7" />
      <AppName>java</AppName>
      <ZoomWord>zoom</ZoomWord>
      <StatusIcon>
        <svg width="33" height="35" viewBox="0 0 33 35">
          <rect x="0" y="3" width="26" height="29" fill="#fff" />
          <rect x="14" y="8" width="19" height="20" fill="#fff" stroke="#0b2c5c" strokeWidth="1.5" />
          <circle cx="10" cy="17" r="5.5" fill="none" stroke="#0b2c5c" strokeWidth="3" />
          <path d="M16 11 L25 20 L33 11" fill="none" stroke="#0b2c5c" strokeWidth="1.6" />
        </svg>
      </StatusIcon>
      <StatusIcon $ml={44}>
        <svg width="31" height="36" viewBox="0 0 31 36">
          <path d="M15.5 1 C21 4 26 4 30 5 V19 C30 27 22 32 15.5 35 C9 32 1 27 1 19 V5 C5 4 10 4 15.5 1Z" fill="#d8dde5" />
          <path d="M4 11 H27 M4 18 H27 M4 25 H27 M11 4 V31 M20 4 V31" stroke="#0e3566" strokeWidth="2.6" />
        </svg>
      </StatusIcon>
      <StatusIcon $ml={47}><Moon size={30} fill="#eef1f6" stroke="#eef1f6" /></StatusIcon>
      <StatusIcon $ml={44}><InputBadge>A</InputBadge></StatusIcon>
      <StatusIcon $ml={41}><Volume2 size={38} fill="#eef1f6" stroke="#eef1f6" strokeWidth={1.6} /></StatusIcon>
      <StatusIcon $ml={37}><Bluetooth size={30} stroke="#eef1f6" strokeWidth={1.8} /></StatusIcon>
      <StatusIcon $ml={33}>
        <svg width="52" height="26" viewBox="0 0 52 26">
          <rect x="1" y="1" width="45" height="24" rx="6" fill="none" stroke="#8ea4c4" strokeWidth="2" />
          <rect x="4" y="4" width="39" height="18" rx="4" fill="#e9edf3" />
          <path d="M49 9 V17" stroke="#8ea4c4" strokeWidth="2.5" />
        </svg>
      </StatusIcon>
      <StatusIcon $ml={36}><Wifi size={37} stroke="#eef1f6" strokeWidth={2.6} /></StatusIcon>
      <StatusIcon $ml={38}><Search size={29} stroke="#eef1f6" strokeWidth={2.2} /></StatusIcon>
      <StatusIcon $ml={28}>
        <svg width="42" height="34" viewBox="0 0 42 34">
          <rect x="1" y="2" width="27" height="13" rx="6.5" fill="none" stroke="#eef1f6" strokeWidth="2" />
          <circle cx="8" cy="8.5" r="6.5" fill="#eef1f6" />
          <rect x="1" y="19" width="27" height="13" rx="6.5" fill="#eef1f6" />
          <circle cx="21" cy="25.5" r="4.5" fill="#0e3566" />
          <circle cx="39" cy="17" r="3.5" fill="#d99a3a" />
        </svg>
      </StatusIcon>
      <StatusIcon $ml={31}>
        <svg width="29" height="31" viewBox="0 0 29 31">
          <defs>
            <radialGradient id="siri" cx="0.5" cy="0.55" r="0.6">
              <stop offset="0" stopColor="#f5f5ff" />
              <stop offset="0.3" stopColor="#d8447e" />
              <stop offset="0.65" stopColor="#4a6ad8" />
              <stop offset="1" stopColor="#3a8a78" />
            </radialGradient>
          </defs>
          <ellipse cx="14.5" cy="15.5" rx="14" ry="15" fill="url(#siri)" />
        </svg>
      </StatusIcon>
      <Clock>Fri 17 Nov  4:39 PM</Clock>
    </MenuBar>

    <DesktopArea>
      <PdfWindow>
        <PdfToolbar>
          <ToolRow>
            <FileName>-1][CheckMate]UG.pdf</FileName>
            <ToolItem>
              <ToolIcons><Info size={30} strokeWidth={1.4} /></ToolIcons>
              <ToolLabel>Inspector</ToolLabel>
            </ToolItem>
            <ToolItem $ml={33}>
              <ToolIcons $gap={22}><ZoomOut size={30} strokeWidth={1.4} /><ZoomIn size={30} strokeWidth={1.4} /></ToolIcons>
              <ToolLabel>Zoom</ToolLabel>
            </ToolItem>
            <ToolItem $ml={36}>
              <ToolIcons><Share size={30} strokeWidth={1.4} /></ToolIcons>
              <ToolLabel>Share</ToolLabel>
            </ToolItem>
            <ToolItem $ml={51}>
              <ToolIcons $gap={12}>
                <PenLine size={30} strokeWidth={1.4} />
                <ToolDivider />
                <ChevronDown size={18} strokeWidth={2} />
              </ToolIcons>
              <ToolLabel>Highlight</ToolLabel>
            </ToolItem>
            <ToolItem $ml={31}>
              <ToolIcons>
                <svg width="30" height="34" viewBox="0 0 30 34" fill="none" stroke="currentColor" strokeWidth="1.5">
                  <rect x="4" y="11" width="18" height="22" rx="2.5" />
                  <path d="M14 6 H24 C26 6 27 7 27 10" />
                  <path d="M18 2 L14 6 L18 10" />
                </svg>
              </ToolIcons>
              <ToolLabel>Rotate</ToolLabel>
            </ToolItem>
            <ToolItem $ml={30}>
              <ToolIcons>
                <svg width="30" height="32" viewBox="0 0 30 32" fill="none" stroke="currentColor" strokeWidth="1.4">
                  <ellipse cx="15" cy="16" rx="13" ry="15" />
                  <path d="M10 23 L15 8 L20 23 M12 18 H18" />
                </svg>
              </ToolIcons>
              <ToolLabel>Markup</ToolLabel>
            </ToolItem>
            <ToolItem $ml={30}>
              <ToolIcons />
              <ToolLabel>Form</ToolLabel>
            </ToolItem>
          </ToolRow>
          <PageOrderRow><PageOrder>Page Order</PageOrder></PageOrderRow>
        </PdfToolbar>
        <PdfPage>
          <TableHead>
            <HeadCell>Action</HeadCell>
            <HeadCell>Format, Examples</HeadCell>
          </TableHead>
          {actions.map(row => (
            <TableRow key={row.name} $shade={row.shade}>
              <ActionCell>{row.name}</ActionCell>
              <FormatCell>
                {row.lines.map(([prefix, code, wrapped]) => (
                  <CodeLine key={code}>
                    {prefix && <Eg>{prefix}</Eg>}
                    <Code $wrapped={wrapped}>{code}</Code>
                  </CodeLine>
                ))}
              </FormatCell>
            </TableRow>
          ))}
          <PageRule />
        </PdfPage>
      </PdfWindow>

      <AppWindow>
        <TitleBar>
          <Light $color="#ee6a5f" />
          <Light $color="#f5bd4f" />
          <Light $color="#61c554" />
          <TitleText>
            <TitleLogo>
              <svg width="30" height="30" viewBox="-110 -110 220 220"><CheckmateMark /></svg>
            </TitleLogo>
            CheckMate App
          </TitleText>
        </TitleBar>

        <TopPanels>
          <Panel $width={490}>
            <Logo width="220" height="210" viewBox="-105 -105 220 210"><CheckmateMark /></Logo>
            <Brand>CHECKMATE</Brand>
            <ButtonRow>
              <MenuButton $width={129}>File</MenuButton>
              <MenuButton $width={145}>Help</MenuButton>
            </ButtonRow>
          </Panel>

          <Panel $width={702}>
            <BookingTitle>Current Bookings</BookingTitle>
            <ScrollPane>
              <BookingList>
                {bookings.map(b => (
                  <BookingCell key={b.line} $selected={b.selected}>
                    <BookingCard $wide={b.wide}>
                      <RoomRow>
                        <RoomName $short={b.short}>{b.line}</RoomName>
                        <Pill>{b.type}</Pill>
                      </RoomRow>
                      <DetailRow $height={44} $mt={4}>
                        <IconSlot><ClockGlyph /></IconSlot>
                        2023-01-01 08:00 to 2023-01-02 12:00
                      </DetailRow>
                      <DetailRow $height={40} $mt={7}>
                        <IconSlot><RemarkGlyph /></IconSlot>
                        {b.remark}
                      </DetailRow>
                    </BookingCard>
                  </BookingCell>
                ))}
              </BookingList>
              <ScrollTrack><ScrollThumb /></ScrollTrack>
            </ScrollPane>
          </Panel>

          <Panel $width={702}>
            <StatsBody>
              <PanelTitle $color="#1a1a1a">Room Statistics</PanelTitle>
              <Donut width="546" height="546" viewBox="0 0 546 546">
                <defs>
                  {slices.map(s => (
                    <linearGradient key={s.id} id={`slice-${s.id}`} x1={s.dir[0]} y1={s.dir[1]} x2={s.dir[2]} y2={s.dir[3]}>
                      <stop offset="0" stopColor={s.stops[0]} />
                      <stop offset="1" stopColor={s.stops[1]} />
                    </linearGradient>
                  ))}
                </defs>
                {slices.map(s => (
                  <path key={s.id} d={ringSlice(s.from, s.to)} fill={`url(#slice-${s.id})`} stroke="#f4f4f4" strokeWidth="3" />
                ))}
              </Donut>
              <Legend>
                {legend.map(([label, color]) => (
                  <LegendRow key={label}>
                    <LegendDot $color={color} />
                    {label}
                  </LegendRow>
                ))}
              </Legend>
            </StatsBody>
          </Panel>
        </TopPanels>

        <ResultPanel>
          <ResultBox>
            <ResultClip>
              <ResultLine>add: Adds a person to the address book. Parameters: r/ROOM d/BOOKING PERIOD n/NAME p/PHONE e/EMAIL rk/REMARK</ResultLine>
              <ResultLine>Example: add r/1 d/2023-01-01 08:00 to 2023-01-02 12:00 n/John Doe p/98765432 e/johnd@gmail.com rk/Requested extra Queen bed</ResultLine>
            </ResultClip>
            <HScrollTrack><HScrollThumb /></HScrollTrack>
          </ResultBox>
        </ResultPanel>

        <InputPanel>
          <CommandText>add</CommandText>
        </InputPanel>

        <StatusBar>./data/checkmate.json</StatusBar>
      </AppWindow>

      <ZoomHud>
        <svg width="38" height="24" viewBox="0 0 38 24" fill="none" stroke="#f1f1f1" strokeWidth="3.8">
          <path d="M2 22 L19 3 L36 22" />
        </svg>
        Talking:
      </ZoomHud>
    </DesktopArea>

    <Dock>
      {dockLeft.map(([icon, on], i) => (
        <DockSlot key={i} $mr={i === dockLeft.length - 1 ? 0 : 22}>
          {icon}
          <RunDot $on={on} />
        </DockSlot>
      ))}
      <DockDivider $left={33} $right={31} />
      {dockRight.map((icon, i) => (
        <DockSlot key={i} $mr={i === dockRight.length - 1 ? 0 : 22}>
          {icon}
          <RunDot $on />
        </DockSlot>
      ))}
      <DockDivider $left={36} $right={23} />
      {thumbs.map(t => (
        <ThumbSlot key={t.width + t.bg} $width={t.width}>
          <Thumb $height={t.height} $bg={t.bg} $bar={t.bar}>
            <ThumbLines $color={t.lines} $art={t.art} $inset={t.inset} $trim={t.trim} />
            {t.badge && <ThumbBadge $right={t.right} $bottom={t.bottom}>{t.badge}</ThumbBadge>}
            {t.caption && <ThumbCaption>{t.caption}</ThumbCaption>}
          </Thumb>
        </ThumbSlot>
      ))}
      <TrashIcon />
    </Dock>
  </Screen>
);

export default App;
